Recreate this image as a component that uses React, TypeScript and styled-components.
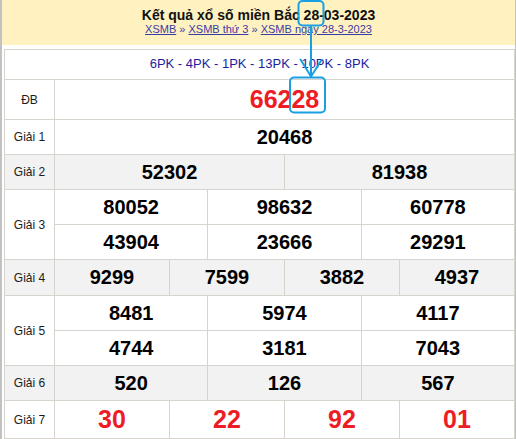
import React from "react";
import styled, { createGlobalStyle } from "styled-components";

const GlobalStyle = createGlobalStyle`
  html, body { margin: 0; padding: 0; background: #fff; }
  body { font-family: "Liberation Sans", Arial, sans-serif; }
`;

const Page = styled.div`
  position: relative;
  box-sizing: border-box;
  width: 516px;
  height: 439px;
  border-left: 2px solid #c2c2c2;
  border-right: 1px solid #c2c2c2;
  background: #fff;
  overflow: hidden;
`;

const Header = styled.header`
  background: #fff2c0;
  height: 45px;
  box-sizing: border-box;
  padding-top: 7px;
  text-align: center;
`;

const Title = styled.h1`
  margin: 0;
  font-size: 14px;
  line-height: 16px;
  font-weight: bold;
  color: #111;
`;

const Crumbs = styled.div`
  font-size: 11px;
  line-height: 13px;
  color: #3b3ba6;
  a {
    color: #3b3ba6;
    text-decoration: underline;
  }
`;

const Board = styled.div`
  display: grid;
  box-sizing: border-box;
  width: 511px;
  margin: 4px 0 0 2px;
  padding: 1px;
  gap: 1px;
  background: #d7d3cd;
  grid-template-columns: 49px repeat(12, 1fr);
  grid-template-rows: 29px 39px 34px 34px 34px 34px 35px 34px 34px 34px 37px;
`;

const Codes = styled.div`
  grid-column: 1 / -1;
  background: #fff;
  display: flex;
  align-items: center;
  justify-content: center;
  font-size: 13px;
  color: #1c1c9e;
  padding-bottom: 2px;
`;

const Label = styled.div<{ $rows: number; $shade: boolean }>`
  grid-row: span ${(p) => p.$rows};
  background: ${(p) => (p.$shade ? "#f2f2f2" : "#fff")};
  display: flex;
  align-items: center;
  justify-content: center;
  font-size: 12px;
  color: #1b1b1b;
`;

const Num = styled.div<{ $cols: number; $shade: boolean; $red: boolean }>`
  grid-column: span ${(p) => p.$cols};
  background: ${(p) => (p.$shade ? "#f2f2f2" : "#fff")};
  display: flex;
  align-items: center;
  justify-content: center;
  font-weight: bold;
  font-size: ${(p) => (p.$red ? "25px" : "20px")};
  color: ${(p) => (p.$red ? "#ee1c25" : "#000")};
`;

const Overlay = styled.svg`
  position: absolute;
  left: -2px;
  top: 0;
  pointer-events: none;
`;

type Prize = { label: string; lines: string[][]; shade?: boolean; red?: boolean };

const prizes: Prize[] = [
  { label: "ĐB", lines: [["66228"]], red: true },
  { label: "Giải 1", lines: [["20468"]] },
  { label: "Giải 2", lines: [["52302", "81938"]], shade: true },
  { label: "Giải 3", lines: [["80052", "98632", "60778"], ["43904", "23666", "29291"]] },
  { label: "Giải 4", lines: [["9299", "7599", "3882", "4937"]], shade: true },
  { label: "Giải 5", lines: [["8481", "5974", "4117"], ["4744", "3181", "7043"]] },
  { label: "Giải 6", lines: [["520", "126", "567"]], shade: true },
  { label: "Giải 7", lines: [["30", "22", "92", "01"]], red: true },
];

export default function App() {
  return (
    <>
      <GlobalStyle />
      <Page>
        <Header>
          <Title>Kết quả xổ số miền Bắc 28-03-2023</Title>
          <Crumbs>
            <a href="#">XSMB</a> » <a href="#">XSMB thứ 3</a> » <a href="#">XSMB ngày 28-3-2023</a>
          </Crumbs>
        </Header>
        <Board>
          <Codes>6PK - 4PK - 1PK - 13PK - 10PK - 8PK</Codes>
          {prizes.map((p) => (
            <React.Fragment key={p.label}>
              <Label $rows={p.lines.length} $shade={!!p.shade}>
                {p.label}
              </Label>
              {p.lines.map((line, i) =>
                line.map((n, j) => (
                  <Num key={`${i}-${j}`} $cols={12 / line.length} $shade={!!p.shade} $red={!!p.red}>
                    {n}
                  </Num>
                ))
              )}
            </React.Fragment>
          ))}
        </Board>
        <Overlay width="516" height="439" viewBox="0 0 516 439">
          <g fill="none" stroke="#1a9fe3" strokeWidth="2" strokeLinecap="round" strokeLinejoin="round">
            <rect x="298.5" y="1" width="25" height="24.5" rx="4" />
            <line x1="311" y1="26" x2="311" y2="76" />
            <polyline points="300.5,59.5 311,76.5 321.5,60" />
            <rect x="290" y="77.5" width="35" height="35" rx="4" />
          </g>
        </Overlay>
      </Page>
    </>
  );
}
